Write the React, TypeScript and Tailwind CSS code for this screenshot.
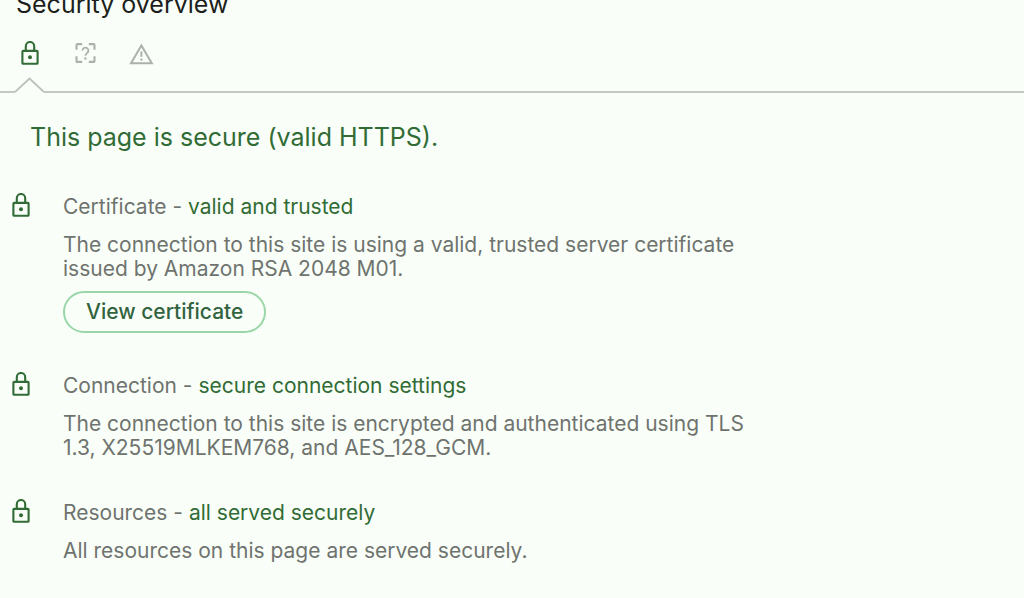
import React, { useState } from "react";

interface ISection {
  title: string;
  status: string;
  text: string;
  action?: string;
}

const sections: ISection[] = [
  {
    title: "Certificate",
    status: "valid and trusted",
    text: "The connection to this site is using a valid, trusted server certificate issued by Amazon RSA 2048 M01.",
    action: "View certificate",
  },
  {
    title: "Connection",
    status: "secure connection settings",
    text: "The connection to this site is encrypted and authenticated using TLS 1.3, X25519MLKEM768, and AES_128_GCM.",
  },
  {
    title: "Resources",
    status: "all served securely",
    text: "All resources on this page are served securely.",
  },
];

const LockIcon = () => (
  <svg
    className="h-6 w-5 shrink-0 text-[#316b35]"
    viewBox="0 0 20 24"
    fill="none"
    stroke="currentColor"
    strokeWidth="2.1"
    aria-hidden="true"
  >
    <rect x="2.4" y="9.9" width="15.2" height="12.9" rx="0.8" />
    <path d="M5.8 9.9V5.2a4.2 4.2 0 0 1 8.4 0v4.7" />
    <circle cx="10" cy="16.2" r="2" fill="currentColor" stroke="none" />
  </svg>
);

const UnknownIcon = () => (
  <svg
    className="h-6 w-6"
    viewBox="0 0 24 24"
    fill="none"
    stroke="currentColor"
    strokeWidth="2.1"
    aria-hidden="true"
  >
    <path d="M2.5 8.8V3.9a.8.8 0 0 1 .8-.8h4.9M14.8 3.1h4.9a.8.8 0 0 1 .8.8v4.9M20.5 15.2v4.9a.8.8 0 0 1-.8.8h-4.9M8.2 20.9H3.3a.8.8 0 0 1-.8-.8v-4.9" />
    <path d="M8.6 9.6a2.9 2.9 0 1 1 4.8 2.1c-1.2 1.1-2 1.6-2 3.1" strokeWidth="1.8" />
    <circle cx="11.4" cy="17.4" r="1.2" fill="currentColor" stroke="none" />
  </svg>
);

const WarningIcon = () => (
  <svg
    className="h-6 w-6 overflow-visible"
    viewBox="0 0 24 24"
    fill="none"
    stroke="currentColor"
    strokeWidth="2"
    aria-hidden="true"
  >
    <path d="M11.4 4.4 21.8 22.2H1Z" />
    <path d="M11.4 10.4v5.4" strokeWidth="2" />
    <circle cx="11.4" cy="18.6" r="1.2" fill="currentColor" stroke="none" />
  </svg>
);

const App = () => {
  const [certificateOpened, setCertificateOpened] = useState(false);

  return (
    <main className="min-h-screen overflow-hidden bg-[#f9fff8] font-['Inter','Liberation_Sans',sans-serif] text-[21px] text-[#6f736f]">
      <header>
        <h1 className="-mt-3 px-4 text-[25px] leading-8 text-[#1d1f1d]">
          Security overview
        </h1>
        <nav className="mt-[21px] flex items-center gap-8 px-[18px] text-[#adb0ac]">
          <button type="button" aria-label="Secure" className="flex w-6 justify-center">
            <LockIcon />
          </button>
          <button type="button" aria-label="Unknown">
            <UnknownIcon />
          </button>
          <button type="button" aria-label="Not secure">
            <WarningIcon />
          </button>
        </nav>
        {/* divider with the arrow under the selected icon */}
        <div className="mt-3 flex items-end">
          <div className="w-[15px] border-b-2 border-[#c3c8c2]" />
          <svg
            className="h-4 w-[29px]"
            viewBox="0 0 29 16"
            fill="none"
            stroke="#bcc0bb"
            strokeWidth="1.8"
            aria-hidden="true"
          >
            <path d="M0 15 14.5 1.5 29 15" />
          </svg>
          <div className="flex-1 border-b-2 border-[#c3c8c2]" />
        </div>
      </header>

      <h2 className="mt-7 px-[30px] text-[25px] leading-8 text-[#316b35]">
        This page is secure (valid HTTPS).
      </h2>

      <div className="mt-10 flex flex-col gap-[39px] px-[11px] pb-8">
        {sections.map((section, i) => (
          <section key={"section" + i} className="flex gap-8">
            <LockIcon />
            <div className="max-w-[690px]">
              <h3 className="leading-7">
                {section.title} -{" "}
                <span className="text-[#316b35]">{section.status}</span>
              </h3>
              <p className="mt-3 leading-6">{section.text}</p>
              {section.action && (
                <button
                  type="button"
                  aria-pressed={certificateOpened}
                  onClick={() => setCertificateOpened(!certificateOpened)}
                  className="mt-[10px] block h-[42px] rounded-full border-2 border-[#9ad7a8] px-[21px] font-medium text-[#32633f]"
                >
                  {section.action}
                </button>
              )}
            </div>
          </section>
        ))}
      </div>
    </main>
  );
};

export default App;
